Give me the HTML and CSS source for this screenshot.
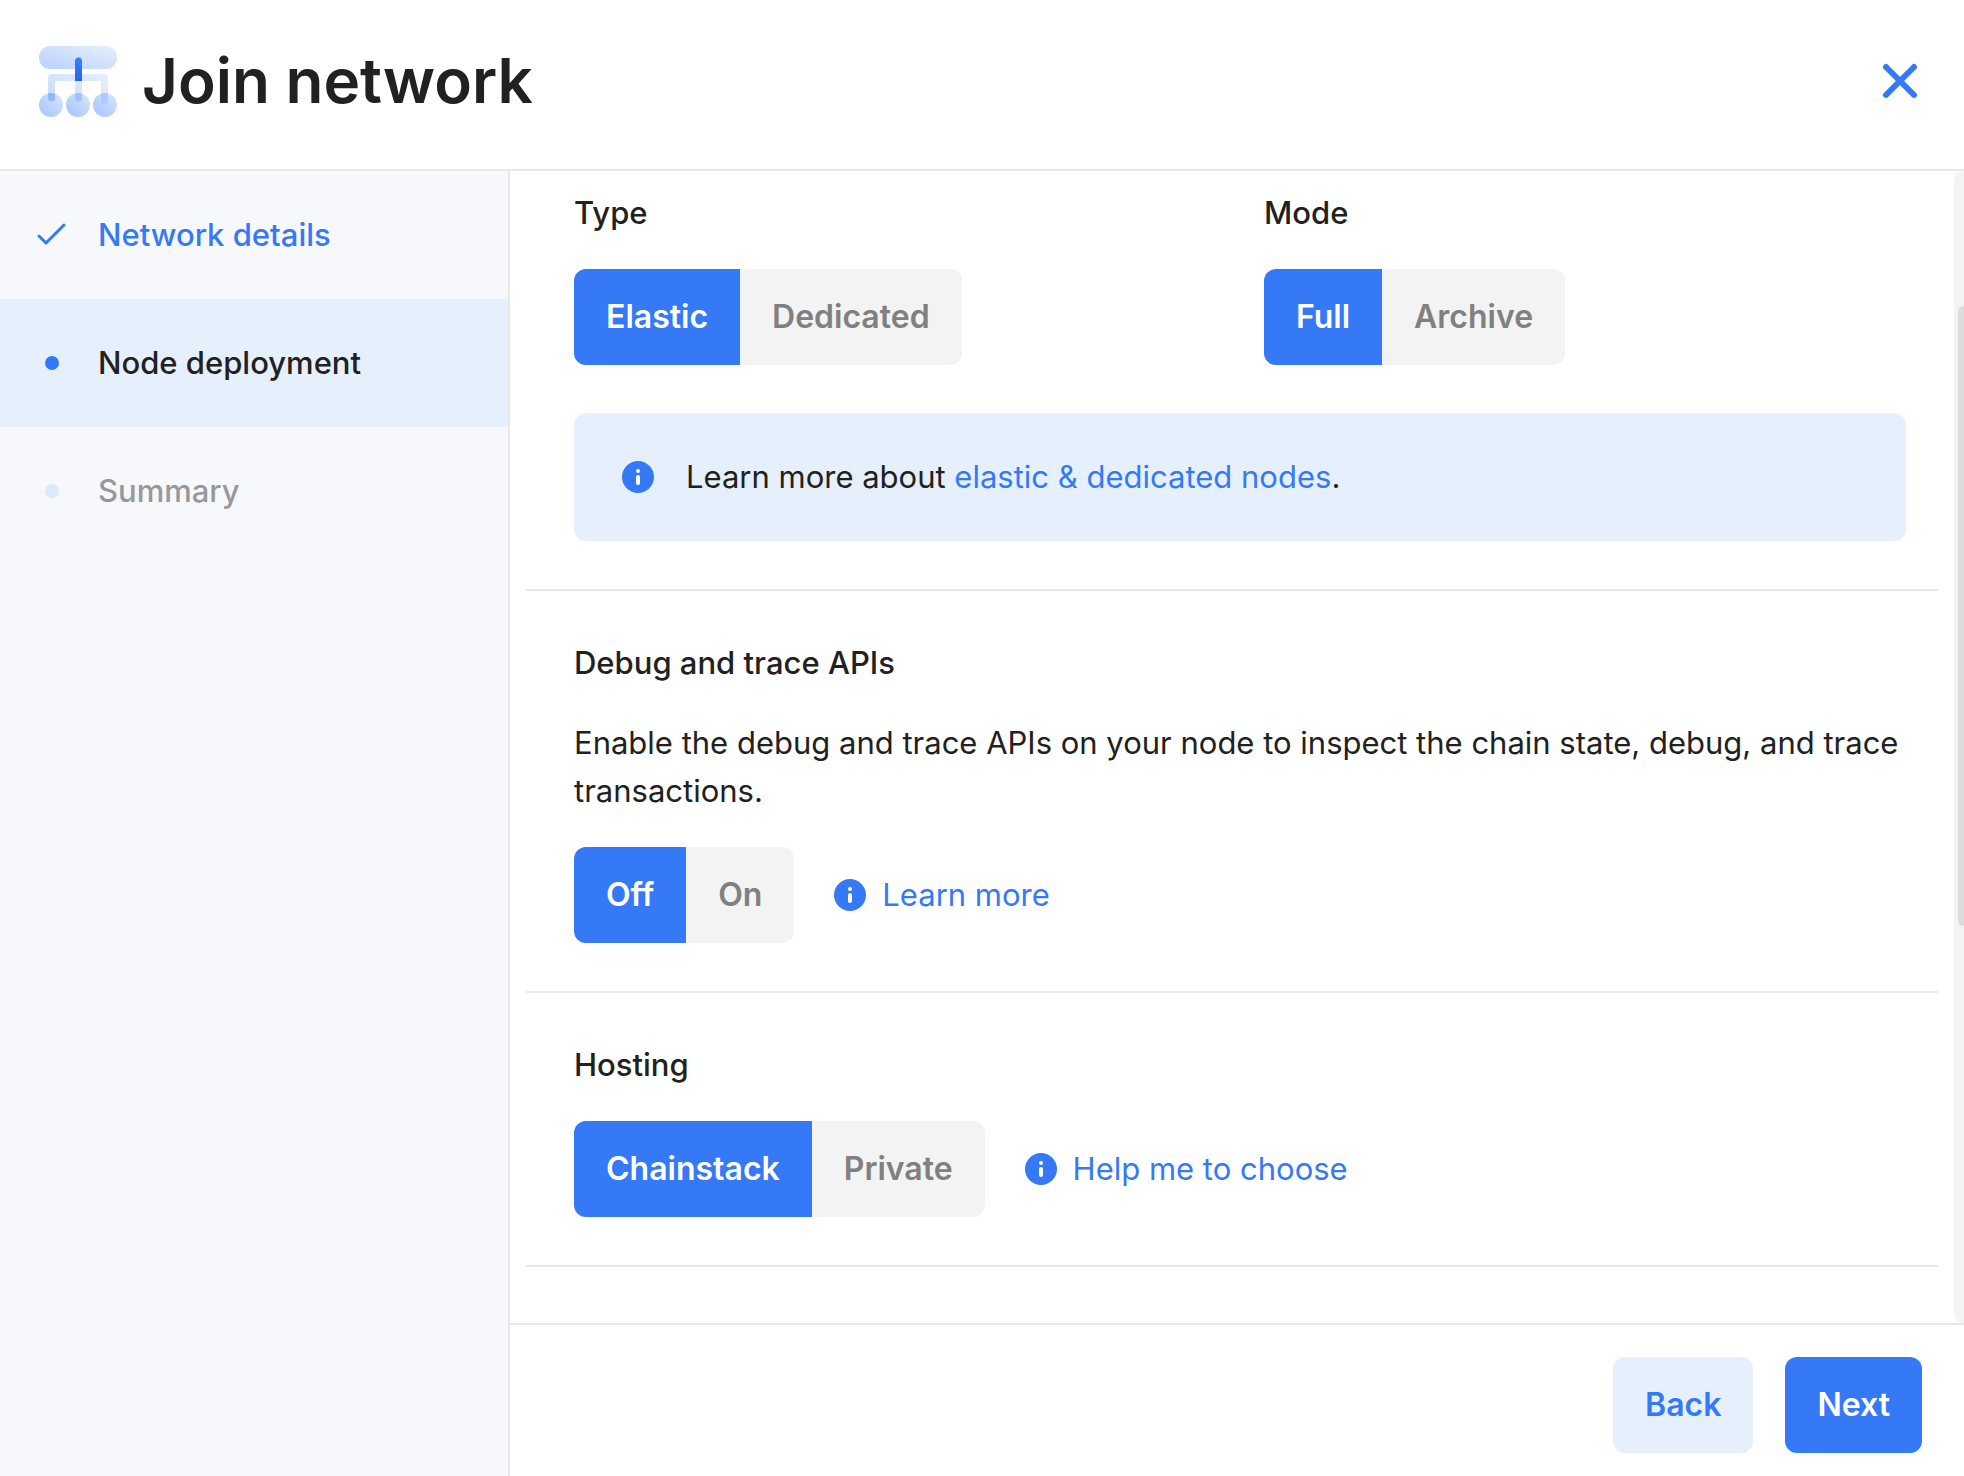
FILE: index.html
```html
<!DOCTYPE html>
<html lang="en">
<head>
<meta charset="utf-8">
<meta name="viewport" content="width=device-width, initial-scale=1">
<title>Join network</title>
<link rel="stylesheet" href="styles.css">
</head>
<body>
<svg class="defs" width="0" height="0" aria-hidden="true">
  <symbol id="info" viewBox="0 0 32 32">
    <circle cx="16" cy="16" r="16" fill="#3579f7"/>
    <circle cx="16" cy="10" r="2" fill="#fff"/>
    <path d="M16 16v6" stroke="#fff" stroke-width="4" stroke-linecap="round"/>
  </symbol>
</svg>
<div class="dialog">
  <header class="header">
    <svg class="logo" viewBox="0 0 80 80" aria-hidden="true">
      <defs>
        <linearGradient id="bar" x1="0" y1="1" x2="1" y2="0"><stop offset="0" stop-color="#b9d0fd"/><stop offset="1" stop-color="#e6effe"/></linearGradient>
        <linearGradient id="ball" x1="0" y1="1" x2="1" y2="0"><stop offset="0" stop-color="#a5c3fc"/><stop offset="1" stop-color="#d9e6fe"/></linearGradient>
        <linearGradient id="frame" x1="0" y1="1" x2="1" y2="0"><stop offset="0" stop-color="#c6d9fe"/><stop offset="1" stop-color="#e6effe"/></linearGradient>
        <linearGradient id="stem" x1="0" y1="0" x2="0" y2="1"><stop offset="0" stop-color="#3a7ef8"/><stop offset="1" stop-color="#2468e8"/></linearGradient>
        <clipPath id="balls"><circle cx="13" cy="64" r="12"/><circle cx="40" cy="64" r="12"/><circle cx="67" cy="64" r="12"/></clipPath>
      </defs>
      <rect x="1" y="5" width="78" height="23" rx="11" fill="url(#bar)"/>
      <path d="M10 57V37a4 4 0 0 1 4-4h52a4 4 0 0 1 4 4v23a3 3 0 0 1-7 0V40H44v17a3 3 0 0 1-7 0V40H17v17a3 3 0 0 1-7 0z" fill="url(#frame)"/>
      <circle cx="13" cy="64" r="12" fill="url(#ball)"/>
      <circle cx="40" cy="64" r="12" fill="url(#ball)"/>
      <circle cx="67" cy="64" r="12" fill="url(#ball)"/>
      <g clip-path="url(#balls)">
        <path d="M10 40h7v17a3 3 0 0 1-7 0z" fill="#94b7fb"/>
        <path d="M37 40h7v17a3 3 0 0 1-7 0z" fill="#a3c1fc"/>
        <path d="M63 40h7v20a3 3 0 0 1-7 0z" fill="#b0cafc"/>
      </g>
      <path d="M37 40V20a3 3 0 0 1 7 0v20z" fill="url(#stem)"/>
    </svg>
    <h1 class="title">Join network</h1>
    <button class="close" type="button" aria-label="Close">
      <svg viewBox="0 0 48 48" aria-hidden="true"><path d="M10 10l28 28M38 10L10 38" fill="none" stroke="#3579f7" stroke-width="6" stroke-linecap="round"/></svg>
    </button>
  </header>
  <nav class="steps" aria-label="Steps">
    <ol class="step-list">
      <li><a class="step step-done" href="#details"><svg class="marker" viewBox="0 0 32 32" aria-hidden="true"><path d="M3 17l7 7L28 6" fill="none" stroke="#3579f7" stroke-width="3" stroke-linecap="round" stroke-linejoin="round"/></svg>Network details</a></li>
      <li><a class="step step-current" href="#deployment" aria-current="step"><svg class="marker" viewBox="0 0 32 32" aria-hidden="true"><circle cx="16" cy="16" r="7" fill="#3579f7"/></svg>Node deployment</a></li>
      <li><a class="step step-next" href="#summary"><svg class="marker" viewBox="0 0 32 32" aria-hidden="true"><circle cx="16" cy="16" r="7" fill="#dbe8fd"/></svg>Summary</a></li>
    </ol>
  </nav>
  <main class="main">
    <form class="form" id="node-form">
      <section class="section section-first">
        <div class="pair">
          <fieldset class="field">
            <legend class="label">Type</legend>
            <div class="segments">
              <label class="segment"><input type="radio" name="type" checked>Elastic</label>
              <label class="segment"><input type="radio" name="type">Dedicated</label>
            </div>
          </fieldset>
          <fieldset class="field">
            <legend class="label">Mode</legend>
            <div class="segments">
              <label class="segment"><input type="radio" name="mode" checked>Full</label>
              <label class="segment"><input type="radio" name="mode">Archive</label>
            </div>
          </fieldset>
        </div>
        <p class="notice"><svg class="info" aria-hidden="true"><use href="#info"/></svg><span>Learn more about <a href="#nodes">elastic &amp; dedicated nodes</a>.</span></p>
      </section>
      <section class="section">
        <fieldset class="field">
          <legend class="label">Debug and trace APIs</legend>
          <p class="text">Enable the debug and trace APIs on your node to inspect the chain state, debug, and trace transactions.</p>
          <div class="row">
            <div class="segments">
              <label class="segment"><input type="radio" name="debug" checked>Off</label>
              <label class="segment"><input type="radio" name="debug">On</label>
            </div>
            <a class="help" href="#debug-help"><svg class="info" aria-hidden="true"><use href="#info"/></svg>Learn more</a>
          </div>
        </fieldset>
      </section>
      <section class="section">
        <fieldset class="field">
          <legend class="label">Hosting</legend>
          <div class="row">
            <div class="segments">
              <label class="segment"><input type="radio" name="hosting" checked>Chainstack</label>
              <label class="segment"><input type="radio" name="hosting">Private</label>
            </div>
            <a class="help" href="#hosting-help"><svg class="info" aria-hidden="true"><use href="#info"/></svg>Help me to choose</a>
          </div>
        </fieldset>
      </section>
    </form>
    <div class="track" aria-hidden="true"><div class="thumb"></div></div>
  </main>
  <footer class="footer">
    <button class="button button-light" type="button">Back</button>
    <button class="button" type="submit" form="node-form">Next</button>
  </footer>
</div>
</body>
</html>
```
FILE: styles.css
```css
:root {
  --blue: #3579f7;
  --pale: #e6f0fd;
  --line: #e8e8e8;
  --ink: #212121;
}

* { box-sizing: border-box; }

body {
  margin: 0;
  background: #fff;
  color: var(--ink);
  font: 400 31px/48px Inter, "Liberation Sans", sans-serif;
}

a { color: var(--blue); text-decoration: none; }
p, h1, ol, fieldset { margin: 0; padding: 0; }
.defs { position: absolute; }

.dialog {
  display: grid;
  grid-template: auto 1fr auto / 510px 1fr;
  height: 100vh;
}

.header {
  grid-column: 1 / -1;
  display: flex;
  align-items: center;
  gap: 24px;
  padding: 33px 40px 40px 38px;
  border-bottom: 2px solid var(--line);
}

.logo { width: 80px; height: 80px; }
.title { flex: 1; font-size: 62px; line-height: 96px; font-weight: 600; }

.close {
  width: 48px;
  height: 48px;
  padding: 0;
  border: 0;
  background: none;
}

.close svg { display: block; }

.steps {
  grid-row: 2 / 4;
  background: #f7f8fc;
  border-right: 2px solid var(--line);
}

.step-list { list-style: none; }

.step {
  display: flex;
  align-items: center;
  gap: 30px;
  padding: 40px 36px;
  font-weight: 500;
}

.marker { width: 32px; height: 32px; }
.step-current { background: var(--pale); color: var(--ink); }
.step-next { color: #97989b; }

.main { position: relative; min-height: 0; overflow: hidden; }
.form { padding: 0 26px 0 16px; }

.section {
  padding: 48px 32px 48px 48px;
  border-bottom: 2px solid var(--line);
}

.section-first { padding-top: 18px; }
.pair { display: grid; grid-template-columns: 1fr 1fr; gap: 48px; }
.field { min-width: 0; border: 0; }
.label { float: left; width: 100%; margin-bottom: 32px; padding: 0; font-weight: 500; }
.label + * { clear: both; }
.text { margin-bottom: 32px; }
.row { display: flex; align-items: center; gap: 40px; }

.segments {
  display: flex;
  width: max-content;
  border-radius: 12px;
  overflow: hidden;
  background: #f3f3f3;
}

.segment {
  position: relative;
  padding: 24px 32px;
  color: #808080;
  font-size: 32px;
  font-weight: 600;
}

.segment input {
  position: absolute;
  inset: 0;
  width: 100%;
  height: 100%;
  margin: 0;
  opacity: 0;
}

.segment:has(:checked) { background: var(--blue); color: #fff; }

.notice {
  display: flex;
  align-items: center;
  gap: 32px;
  margin-top: 48px;
  padding: 40px 48px;
  border-radius: 12px;
  background: var(--pale);
}

.info { flex: none; width: 32px; height: 32px; }
.help { display: flex; align-items: center; gap: 16px; }

.track {
  position: absolute;
  inset: 0 0 0 auto;
  width: 10px;
  padding: 135px 0 0 4px;
  border-radius: 10px 0 0 10px;
  background: #f3f3f3;
}

.thumb { height: 61%; border-radius: 6px 0 0 6px; background: #dcdcdc; }

.footer {
  display: flex;
  justify-content: flex-end;
  gap: 32px;
  padding: 32px 42px 23px;
  border-top: 2px solid var(--line);
}

.button {
  padding: 24px 32px;
  border: 0;
  border-radius: 12px;
  background: var(--blue);
  color: #fff;
  font: inherit;
  font-size: 32px;
  font-weight: 600;
}

.button-light { background: var(--pale); color: var(--blue); }
```
